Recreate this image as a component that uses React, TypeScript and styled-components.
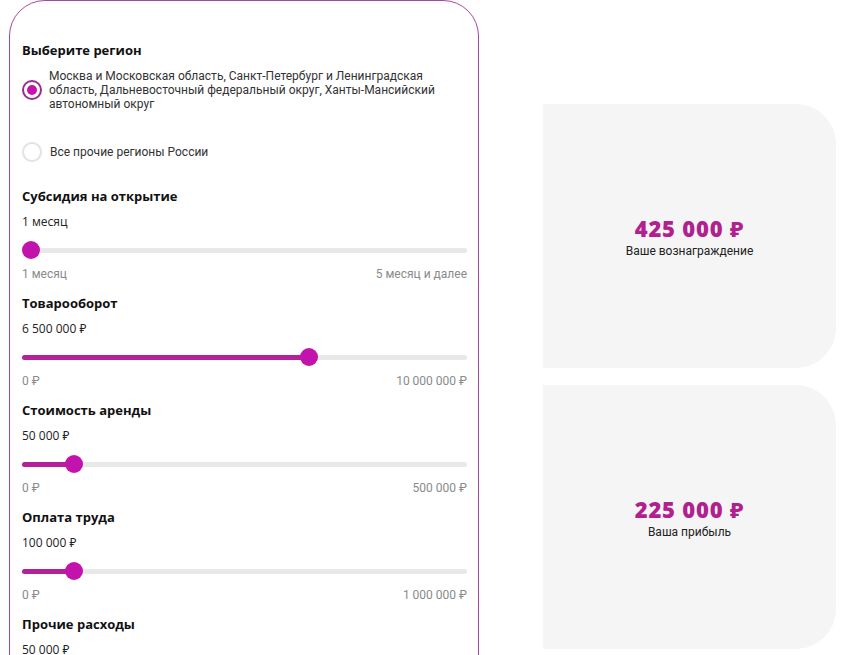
import React, { FC } from 'react';
import styled, { createGlobalStyle } from 'styled-components';

const GlobalStyle = createGlobalStyle`
  body {
    margin: 0;
    background: #fff;
    font-family: Roboto, "Liberation Sans", sans-serif;
    color: #222;
  }
`;

const Page = styled.div`
  display: flex;
  align-items: flex-start;
  padding-left: 9px;
  gap: 64px;
`;

const FormCard = styled.div`
  width: 470px;
  box-sizing: border-box;
  border: 1px solid #a44a9c;
  border-radius: 36px;
  padding: 41px 11px 40px 12px;
  background: #fff;
`;

const Heading = styled.div`
  font-family: "Open Sans", "Noto Sans", sans-serif;
  font-weight: 700;
  font-size: 13px;
  line-height: 16px;
  color: #111;
`;

const RadioList = styled.div`
  display: flex;
  flex-direction: column;
  gap: 31px;
  margin: 11px 0 26px;
`;

const RadioRow = styled.label`
  display: flex;
  align-items: center;
  gap: 7px;
  font-size: 12px;
  line-height: 14px;
  color: #333;
`;

const RadioCircle = styled.span<{ $checked: boolean }>`
  flex: none;
  width: 20px;
  height: 20px;
  box-sizing: border-box;
  border-radius: 50%;
  border: 2px solid ${p => (p.$checked ? '#9a2b8e' : '#e2e2e2')};
  display: flex;
  align-items: center;
  justify-content: center;
  &::after {
    content: '';
    width: 10px;
    height: 10px;
    border-radius: 50%;
    background: ${p => (p.$checked ? '#c414ab' : 'transparent')};
  }
`;

const RadioText = styled.span<{ $wide?: boolean }>`
  max-width: ${p => (p.$wide ? '400px' : 'none')};
  padding-left: ${p => (p.$wide ? '0' : '1px')};
`;

const Section = styled.div`
  margin-bottom: 14px;
`;

const Value = styled.div`
  font-family: "Open Sans", "Noto Sans", sans-serif;
  font-size: 12px;
  line-height: 16px;
  color: #222;
  margin: 10px 0 11px;
`;

const SliderBox = styled.div`
  position: relative;
  height: 18px;
  display: flex;
  align-items: center;
`;

const Track = styled.div`
  position: relative;
  width: 100%;
  height: 5px;
  border-radius: 3px;
  background: #e8e8e8;
`;

const Fill = styled.div`
  position: absolute;
  left: 0;
  top: 0;
  bottom: 0;
  border-radius: 3px;
  background: #b3209a;
`;

const Thumb = styled.div`
  position: absolute;
  top: 0;
  width: 18px;
  height: 18px;
  margin-left: -9px;
  border-radius: 50%;
  background: #c214ac;
`;

const Scale = styled.div`
  display: flex;
  justify-content: space-between;
  margin-top: 8px;
  font-size: 12px;
  line-height: 14px;
  color: #8a8a8a;
`;

const ResultColumn = styled.div`
  display: flex;
  flex-direction: column;
  gap: 17px;
  padding-top: 104px;
`;

const ResultCard = styled.div`
  width: 293px;
  height: 264px;
  background: #f5f5f5;
  border-radius: 0 40px 40px 0;
  display: flex;
  flex-direction: column;
  align-items: center;
  justify-content: center;
  gap: 3px;
`;

const Amount = styled.div`
  font-family: "Open Sans", "Noto Sans", sans-serif;
  font-weight: 800;
  font-size: 22px;
  line-height: 26px;
  letter-spacing: 0.8px;
  color: #b0218f;
`;

const AmountLabel = styled.div`
  font-size: 12px;
  line-height: 14px;
  color: #222;
`;

type SliderField = {
  title: string;
  value: string;
  min: string;
  max: string;
  ratio: number;
};

const fields: SliderField[] = [
  { title: 'Субсидия на открытие', value: '1 месяц', min: '1 месяц', max: '5 месяц и далее', ratio: 0 },
  { title: 'Товарооборот', value: '6 500 000 ₽', min: '0 ₽', max: '10 000 000 ₽', ratio: 0.65 },
  { title: 'Стоимость аренды', value: '50 000 ₽', min: '0 ₽', max: '500 000 ₽', ratio: 0.1 },
  { title: 'Оплата труда', value: '100 000 ₽', min: '0 ₽', max: '1 000 000 ₽', ratio: 0.1 },
  { title: 'Прочие расходы', value: '50 000 ₽', min: '0 ₽', max: '500 000 ₽', ratio: 0.1 },
];

const Slider: FC<{ ratio: number }> = ({ ratio }) => {
  const pos = `calc(9px + (100% - 18px) * ${ratio})`;
  return (
    <SliderBox>
      <Track>
        {ratio > 0 && <Fill style={{ width: pos }} />}
      </Track>
      <Thumb style={{ left: pos }} />
    </SliderBox>
  );
};

const App: FC = () => {
  return (
    <>
      <GlobalStyle />
      <Page>
        <FormCard>
          <Heading>Выберите регион</Heading>
          <RadioList>
            <RadioRow>
              <RadioCircle $checked />
              <RadioText $wide>
                Москва и Московская область, Санкт-Петербург и Ленинградская область, Дальневосточный федеральный округ, Ханты-Мансийский автономный округ
              </RadioText>
            </RadioRow>
            <RadioRow>
              <RadioCircle $checked={false} />
              <RadioText>Все прочие регионы России</RadioText>
            </RadioRow>
          </RadioList>
          {fields.map(f => (
            <Section key={f.title}>
              <Heading>{f.title}</Heading>
              <Value>{f.value}</Value>
              <Slider ratio={f.ratio} />
              <Scale>
                <span>{f.min}</span>
                <span>{f.max}</span>
              </Scale>
            </Section>
          ))}
        </FormCard>
        <ResultColumn>
          <ResultCard>
            <Amount>425 000 ₽</Amount>
            <AmountLabel>Ваше вознаграждение</AmountLabel>
          </ResultCard>
          <ResultCard>
            <Amount>225 000 ₽</Amount>
            <AmountLabel>Ваша прибыль</AmountLabel>
          </ResultCard>
        </ResultColumn>
      </Page>
    </>
  );
};

export default App;
